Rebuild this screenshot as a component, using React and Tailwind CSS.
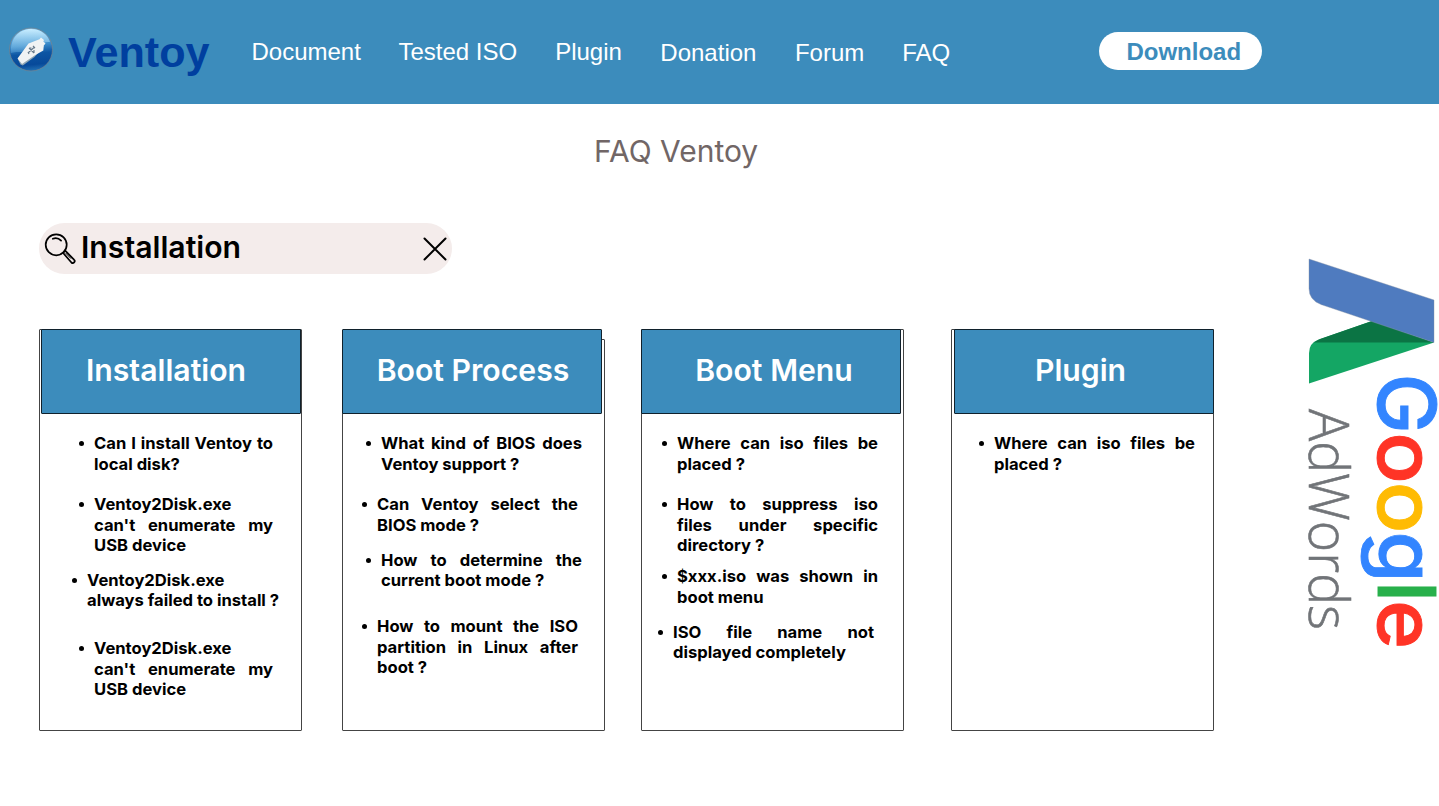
const navItems = [
  { label: "Document", place: "ml-[41.500px]" },
  { label: "Tested ISO", place: "ml-[37.500px]" },
  { label: "Plugin", place: "ml-[38px]" },
  { label: "Donation", place: "ml-[38.500px] pt-0.5" },
  { label: "Forum", place: "ml-[38.500px] pt-0.5" },
  { label: "FAQ", place: "ml-[38px] pt-0.5" },
];

const cards = [
  {
    title: "Installation",
    frame: "h-[402px]",
    header: "-mt-px ml-px w-[260px] pr-[10px]",
    list: "pl-[54px]",
    items: [
      { text: "Can I install Ventoy to local disk?", place: "w-[179px]" },
      { text: "Ventoy2Disk.exe can't enumerate my USB device", place: "mt-[20.300px] w-[179px]" },
      { text: "Ventoy2Disk.exe always failed to install ?", place: "mt-[14.800px] -ml-[7px] w-[194px]" },
      { text: "Ventoy2Disk.exe can't enumerate my USB device", place: "mt-[27.800px] w-[179px]" },
    ],
  },
  {
    title: "Boot Process",
    frame: "mt-[10px] ml-[40px] h-[392px]",
    header: "-mt-[11px] -ml-px w-[260px] pl-[2px]",
    list: "pl-[38px]",
    items: [
      { text: "What kind of BIOS does Ventoy support ?", place: "w-[201px]" },
      { text: "Can Ventoy select the BIOS mode ?", place: "mt-[20.300px] -ml-[4px] w-[201px]" },
      { text: "How to determine the current boot mode ?", place: "mt-[15px] w-[201px]" },
      { text: "How to mount the ISO partition in Linux after boot ?", place: "mt-[26px] -ml-[4px] w-[201px]" },
    ],
  },
  {
    title: "Boot Menu",
    frame: "ml-[36px] h-[402px]",
    header: "-mt-px -ml-px w-[260px] pl-[6px]",
    list: "pl-[35px]",
    items: [
      { text: "Where can iso files be placed ?", place: "w-[201px]" },
      { text: "How to suppress iso files under specific directory ?", place: "mt-[20.300px] w-[201px]" },
      { text: "$xxx.iso was shown in boot menu", place: "mt-[11.200px] w-[201px]" },
      { text: "ISO file name not displayed completely", place: "mt-[14.600px] -ml-[4px] w-[201px]" },
    ],
  },
  {
    title: "Plugin",
    frame: "ml-[47px] h-[402px]",
    header: "-mt-px ml-[2px] w-[260px] pr-[7px]",
    list: "pl-[42px]",
    items: [{ text: "Where can iso files be placed ?", place: "w-[201px]" }],
  },
];

function UsbLogo() {
  return (
    <svg className="h-[46px] w-[46px]" viewBox="0 0 46 46" aria-hidden="true">
      <defs>
        <linearGradient id="ball" x1="0.45" y1="0" x2="0.55" y2="1">
          <stop offset="0" stopColor="#79bfea" />
          <stop offset="0.4" stopColor="#3b8ccb" />
          <stop offset="0.6" stopColor="#0c55a3" />
          <stop offset="0.85" stopColor="#07499a" />
          <stop offset="1" stopColor="#2272b5" />
        </linearGradient>
        <linearGradient id="shine" x1="0" y1="0" x2="0" y2="1">
          <stop offset="0" stopColor="#c9edff" />
          <stop offset="1" stopColor="#6db4e2" stopOpacity="0.35" />
        </linearGradient>
      </defs>
      <circle cx="23" cy="23.5" r="21.5" fill="url(#ball)" stroke="#78838c" strokeWidth="0.7" />
      <path d="M3 27C2 12 11 3 23 3c10 0 17 6 19 13-8-1-11 5-18 8-8 3-14 1-21 3z" fill="url(#shine)" />
      <path d="M10 33.500 20 19 36 20 26.500 31 14.800 39.500 12.500 38.500z" fill="#8fa5b4" />
      <path d="M9.500 32.500 20.500 17.500 31.500 13.200 33 11.500 36 14 35.300 15.500 37.500 17.500 35.800 19.500 35.300 24.500 26.500 29.500 14 38z" fill="#f1f3f4" />
      <path d="M20.500 26.500l6-5.500m-5.500 1 5 5m-4.500-5h2m2.500 5v-3m-5 4-1-2m5-6 2 2" stroke="#66798a" strokeWidth="1.100" fill="none" />
    </svg>
  );
}

function SearchIcon() {
  return (
    <svg className="h-8 w-8" viewBox="0 0 32 32" fill="none" stroke="#000" strokeWidth="1.700" aria-hidden="true">
      <circle cx="12.200" cy="11.800" r="10.500" />
      <path d="M8.800 5.800c3-1.200 6.200-.3 8.300 1.800" strokeLinecap="round" />
      <path d="M19 19.800 21.200 17.600 30 26.600a1.700 1.700 0 0 1-2.600 2.900z" strokeLinejoin="round" />
      <path d="M21.500 19.900l5.500 5.700" strokeWidth="1" />
    </svg>
  );
}

const googleLetters = [
  { char: "G", y: 403.5, stretch: 1.02, fill: "#3385ff" },
  { char: "o", y: 458, stretch: 1.08, fill: "#ff3426" },
  { char: "o", y: 507.5, stretch: 1.08, fill: "#ffbb03" },
  { char: "g", y: 557, stretch: 1.05, fill: "#3385ff" },
  { char: "l", y: 591.5, stretch: 1.08, fill: "#28b04b" },
  { char: "e", y: 624.5, stretch: 1.06, fill: "#ff3426" },
];

function AdWordsLogo() {
  return (
    <svg className="h-[410px] w-[139px]" viewBox="1300 250 139 410" role="img" aria-label="Google AdWords">
      <path d="M1309 383.500V353q0-10 10-13.500L1372 321l62 21.500z" fill="#14a664" />
      <path d="M1314 342.500q2-2 6-3.500L1372 321l62 21.500z" fill="#0b7444" />
      <path d="M1309 259l125 41v42.500L1321 304.500q-12-4.500-12-16z" fill="#4f7bbf" stroke="#8593a5" strokeWidth="0.4" />
      <g fontFamily="Inter" fontWeight="500" fontSize="79" textAnchor="middle" strokeWidth="0.900">
        {googleLetters.map((l, i) => (
          <text key={i} transform={`translate(1377.500 ${l.y}) rotate(90) scale(${l.stretch} 1.01)`} fill={l.fill} stroke={l.fill}>{l.char}</text>
        ))}
      </g>
      <text transform="translate(1309 409) rotate(90)" fontSize="55" fontFamily="Open Sans" fontWeight="300" fill="#717478" stroke="#717478" strokeWidth="0.6" textLength="221" lengthAdjust="spacingAndGlyphs">AdWords</text>
    </svg>
  );
}

function Card({ card }) {
  return (
    <section className={`w-[263px] shrink-0 rounded-[1px] border border-[#444] ${card.frame}`}>
      <h2 className={`flex h-[85px] items-center justify-center rounded-[1px] border border-[#10212c] bg-[#3c8cbc] pb-0.5 text-[30.200px] font-semibold text-white ${card.header}`}>
        {card.title}
      </h2>
      <ul className={`mt-[19.400px] ${card.list}`}>
        {card.items.map((item, i) => (
          <li key={i} className={`relative text-justify text-[16.600px] leading-[20.300px] font-bold ${item.place}`}>
            <span className="absolute top-[8px] -left-[15px] size-[5px] rounded-full bg-black" />
            {item.text}
          </li>
        ))}
      </ul>
    </section>
  );
}

export default function App() {
  return (
    <div className="h-[806px] w-[1439px] overflow-hidden bg-white font-['Inter',sans-serif] text-black">
      <header className="flex h-[104px] items-center bg-[#3c8cbc] font-['Liberation_Sans',sans-serif]">
        <div className="flex items-center pl-2">
          <div className="pb-1.5">
            <UsbLogo />
          </div>
          <span className="ml-[14px] w-[142px] text-[43.200px] leading-[50px] font-bold text-[#003f9f]">Ventoy</span>
        </div>
        <nav className="flex items-center text-2xl text-white">
          {navItems.map((item) => (
            <a key={item.label} className={item.place}>{item.label}</a>
          ))}
        </nav>
        <button className="mb-0.5 ml-[149px] h-[38px] w-[163px] rounded-full bg-white pt-[2px] pl-1.5 text-2xl font-bold text-[#3c8cbc]">
          Download
        </button>
      </header>
      <div className="flex">
        <main className="w-[1300px] shrink-0">
          <h1 className="mt-[28px] ml-[594px] text-[30px] leading-[38px] font-normal text-[#716666]">FAQ Ventoy</h1>
          <div className="mt-[53px] ml-[39px] flex h-[51px] w-[413px] items-center rounded-full bg-[#f4eceb] pr-[5px] pl-[5px]">
            <SearchIcon />
            <span className="ml-[5px] pb-1 text-[30.200px] leading-[38px] font-semibold">Installation</span>
            <svg className="ml-auto size-6" viewBox="0 0 24 24" fill="none" stroke="#000" strokeWidth="2" strokeLinecap="round" aria-hidden="true">
              <path d="M1.500 1.500l21 21M22.500 1.500l-21 21" />
            </svg>
          </div>
          <div className="mt-[55px] flex items-start pl-[39px]">
            {cards.map((card) => (
              <Card key={card.title} card={card} />
            ))}
          </div>
        </main>
        <aside className="mt-[146px] shrink-0">
          <AdWordsLogo />
        </aside>
      </div>
    </div>
  );
}
